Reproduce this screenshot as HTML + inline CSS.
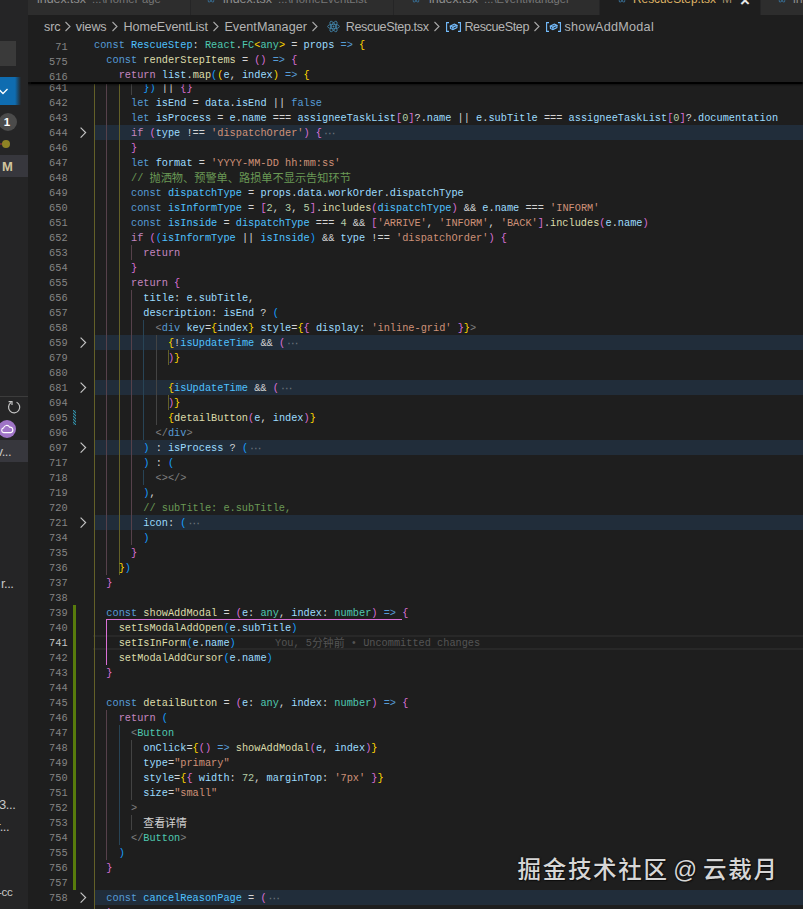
<!DOCTYPE html>
<html lang="zh-CN">
<head>
<meta charset="utf-8">
<title>RescueStep.tsx</title>
<style>
html,body{margin:0;padding:0;background:#1e1e1e;}
body{width:803px;height:909px;overflow:hidden;position:relative;font-family:"Liberation Sans","Noto Sans CJK SC",sans-serif;}
#app{position:absolute;left:0;top:0;width:803px;height:909px;overflow:hidden;background:#1e1e1e;}
.abs{position:absolute;}
/* side bar */
#side{position:absolute;left:0;top:0;width:28px;height:909px;background:#252526;overflow:hidden;}
#side .t{position:absolute;color:#c8c8c8;font-size:13px;line-height:16px;white-space:pre;}
/* tabs */
#tabs{position:absolute;left:28px;top:0;width:775px;height:15px;background:#252526;overflow:hidden;}
.tab{position:absolute;top:0;height:14.5px;background:#2d2d2d;overflow:hidden;}
.tab span{position:absolute;top:-8px;font-size:12.4px;line-height:15px;white-space:pre;color:#8f8f8f;}
.tab span.d{font-size:11.25px;color:#777;}
/* breadcrumb */
#crumbs{position:absolute;left:28px;top:15px;width:775px;height:22px;background:#1e1e1e;}
#crumbs span{position:absolute;top:1px;height:22px;line-height:22px;font-size:12.6px;color:#b4b4b4;white-space:pre;}
#crumbs svg{position:absolute;}
/* code */
.ln,.cl{font-family:"Liberation Mono","Noto Sans CJK SC",monospace;font-size:10.27px;line-height:15px;height:15px;white-space:pre;position:absolute;}
.ln{left:28px;width:39.6px;text-align:right;color:#858585;}
.ln.cur{color:#c6c6c6;}
.cl{left:94px;color:#d4d4d4;letter-spacing:0px;}
.k{color:#569cd6}.c{color:#c586c0}.v{color:#9cdcfe}.cv{color:#4fc1ff}.f{color:#dcdcaa}.t{color:#4ec9b0}
.s{color:#ce9178}.n{color:#b5cea8}.m{color:#6a9955}.g{color:#808080}
.b1{color:#ffd700}.b2{color:#da70d6}.b3{color:#179fff}
.mz,.z{font-size:11.2px;letter-spacing:0;position:relative;top:1px;}
.z{font-size:10.9px;top:0.5px;}
.mz{color:#6a9955}
.fd{color:#6b747c;display:inline-block;width:12px;margin-left:2px;font-family:"DejaVu Sans",sans-serif;font-size:11.5px;letter-spacing:0;text-align:center;line-height:15px;vertical-align:top;position:relative;top:0px;}
.fold{position:absolute;left:93.5px;width:709.5px;height:15px;background:#212d3a;}
.gd{position:absolute;width:1px;}
.g0{background:#434343}.g1{background:#636028}.g2{background:#56414b}.g3{background:#284456}
.blame{color:#545454;}
#sticky{position:absolute;left:28px;top:37px;width:775px;height:45px;background:#1e1e1e;box-shadow:0 1.5px 1px 0 #000,0 3px 2px 0 rgba(0,0,0,.45);}
#wm{position:absolute;left:517.5px;top:852px;font-size:23.5px;letter-spacing:1.7px;word-spacing:-3.8px;line-height:36px;color:#d6d6d6;font-weight:500;white-space:pre;text-shadow:0 0 2px rgba(0,0,0,.6),1px 1px 1px rgba(0,0,0,.5);}

</style>
</head>
<body>
<div id="app">
<div id="editor" class="abs" style="left:28px;top:37px;width:775px;height:872px;"></div>
<div class="fold" style="top:125px"></div>
<div class="fold" style="top:335px"></div>
<div class="fold" style="top:380px"></div>
<div class="fold" style="top:440px"></div>
<div class="fold" style="top:515px"></div>
<div class="fold" style="top:890px"></div>
<div class="abs" style="left:93px;top:635px;width:710px;height:11px;border-top:2px solid #282828;border-bottom:2px solid #282828;"></div>
<div class="gd g1" style="left:94.0px;top:80px;height:840px"></div>
<div class="gd g2" style="left:106.3px;top:80px;height:495px"></div>
<div class="gd g1" style="left:118.7px;top:80px;height:495px"></div>
<div class="gd g0" style="left:131.0px;top:80px;height:15px"></div>
<div class="gd g2" style="left:131.0px;top:245px;height:15px"></div>
<div class="gd g2" style="left:131.0px;top:290px;height:255px"></div>
<div class="gd g3" style="left:143.3px;top:320px;height:120px"></div>
<div class="gd g3" style="left:143.3px;top:470px;height:15px"></div>
<div class="gd g0" style="left:155.6px;top:335px;height:90px"></div>
<div class="gd g1" style="left:167.9px;top:350px;height:15px"></div>
<div class="gd g1" style="left:167.9px;top:395px;height:15px"></div>
<div class="gd g2" style="left:106.3px;top:710px;height:150px"></div>
<div class="gd g3" style="left:118.7px;top:725px;height:120px"></div>
<div class="gd g0" style="left:131.0px;top:740px;height:60px"></div>
<div class="gd g0" style="left:131.0px;top:815px;height:15px"></div>
<div class="abs" style="left:106.3px;top:619px;width:1px;height:46px;background:#da70d6"></div>
<div class="abs" style="left:106.3px;top:619px;width:295.8px;height:1px;background:#da70d6"></div>
<div class="abs" style="left:73px;top:605px;width:3px;height:285px;background:#587c0c"></div>
<svg class="abs" style="left:73px;top:410px" width="3" height="15" viewBox="0 0 3 15"><path d="M-1 -4L4 1M-1 -1L4 4M-1 2L4 7M-1 5L4 10M-1 8L4 13M-1 11L4 16M-1 14L4 19" stroke="#3497b2" stroke-width="1.05"/></svg>
<div class="ln" style="top:81px">641</div>
<div class="cl" style="top:81px">        <span class="b3">})</span> || <span class="b2">{}</span></div>
<div class="ln" style="top:96px">642</div>
<div class="cl" style="top:96px">      <span class="k">let</span> <span class="v">isEnd</span> = <span class="v">data</span>.<span class="v">isEnd</span> || <span class="k">false</span></div>
<div class="ln" style="top:111px">643</div>
<div class="cl" style="top:111px">      <span class="k">let</span> <span class="v">isProcess</span> = <span class="v">e</span>.<span class="v">name</span> === <span class="v">assigneeTaskList</span><span class="b2">[</span><span class="n">0</span><span class="b2">]</span>?.<span class="v">name</span> || <span class="v">e</span>.<span class="v">subTitle</span> === <span class="v">assigneeTaskList</span><span class="b2">[</span><span class="n">0</span><span class="b2">]</span>?.<span class="v">documentation</span></div>
<div class="ln" style="top:126px">644</div>
<div class="cl" style="top:126px">      <span class="c">if</span> <span class="b2">(</span><span class="v">type</span> !== <span class="s">'dispatchOrder'</span><span class="b2">)</span> <span class="b2">{</span><span class="fd">⋯</span></div>
<svg class="abs" style="left:78px;top:125px" width="10" height="15" viewBox="0 0 10 15"><path d="M2.6 2.6L7.6 7.6L2.6 12.6" fill="none" stroke="#c5c5c5" stroke-width="1.2"/></svg>
<div class="ln" style="top:141px">646</div>
<div class="cl" style="top:141px">      <span class="b2">}</span></div>
<div class="ln" style="top:156px">647</div>
<div class="cl" style="top:156px">      <span class="k">let</span> <span class="v">format</span> = <span class="s">'YYYY-MM-DD hh:mm:ss'</span></div>
<div class="ln" style="top:171px">648</div>
<div class="cl" style="top:171px">      <span class="m">// </span><span class="mz">抛洒物、预警单、路损单不显示告知环节</span></div>
<div class="ln" style="top:186px">649</div>
<div class="cl" style="top:186px">      <span class="k">const</span> <span class="cv">dispatchType</span> = <span class="v">props</span>.<span class="v">data</span>.<span class="v">workOrder</span>.<span class="v">dispatchType</span></div>
<div class="ln" style="top:201px">650</div>
<div class="cl" style="top:201px">      <span class="k">const</span> <span class="cv">isInformType</span> = <span class="b2">[</span><span class="n">2</span>, <span class="n">3</span>, <span class="n">5</span><span class="b2">]</span>.<span class="f">includes</span><span class="b2">(</span><span class="cv">dispatchType</span><span class="b2">)</span> &amp;&amp; <span class="v">e</span>.<span class="v">name</span> === <span class="s">'INFORM'</span></div>
<div class="ln" style="top:216px">651</div>
<div class="cl" style="top:216px">      <span class="k">const</span> <span class="cv">isInside</span> = <span class="cv">dispatchType</span> === <span class="n">4</span> &amp;&amp; <span class="b2">[</span><span class="s">'ARRIVE'</span>, <span class="s">'INFORM'</span>, <span class="s">'BACK'</span><span class="b2">]</span>.<span class="f">includes</span><span class="b2">(</span><span class="v">e</span>.<span class="v">name</span><span class="b2">)</span></div>
<div class="ln" style="top:231px">652</div>
<div class="cl" style="top:231px">      <span class="c">if</span> <span class="b2">(</span><span class="b3">(</span><span class="cv">isInformType</span> || <span class="cv">isInside</span><span class="b3">)</span> &amp;&amp; <span class="v">type</span> !== <span class="s">'dispatchOrder'</span><span class="b2">)</span> <span class="b2">{</span></div>
<div class="ln" style="top:246px">653</div>
<div class="cl" style="top:246px">        <span class="c">return</span></div>
<div class="ln" style="top:261px">654</div>
<div class="cl" style="top:261px">      <span class="b2">}</span></div>
<div class="ln" style="top:276px">655</div>
<div class="cl" style="top:276px">      <span class="c">return</span> <span class="b2">{</span></div>
<div class="ln" style="top:291px">656</div>
<div class="cl" style="top:291px">        <span class="v">title</span>: <span class="v">e</span>.<span class="v">subTitle</span>,</div>
<div class="ln" style="top:306px">657</div>
<div class="cl" style="top:306px">        <span class="v">description</span>: <span class="v">isEnd</span> ? <span class="b3">(</span></div>
<div class="ln" style="top:321px">658</div>
<div class="cl" style="top:321px">          <span class="g">&lt;</span><span class="k">div</span> <span class="v">key</span>=<span class="b1">{</span><span class="v">index</span><span class="b1">}</span> <span class="v">style</span>=<span class="b1">{</span><span class="b2">{</span> <span class="v">display</span>: <span class="s">'inline-grid'</span> <span class="b2">}</span><span class="b1">}</span><span class="g">&gt;</span></div>
<div class="ln" style="top:336px">659</div>
<div class="cl" style="top:336px">            <span class="b1">{</span>!<span class="cv">isUpdateTime</span> &amp;&amp; <span class="b2">(</span><span class="fd">⋯</span></div>
<svg class="abs" style="left:78px;top:335px" width="10" height="15" viewBox="0 0 10 15"><path d="M2.6 2.6L7.6 7.6L2.6 12.6" fill="none" stroke="#c5c5c5" stroke-width="1.2"/></svg>
<div class="ln" style="top:351px">679</div>
<div class="cl" style="top:351px">            <span class="b2">)</span><span class="b1">}</span></div>
<div class="ln" style="top:366px">680</div>
<div class="ln" style="top:381px">681</div>
<div class="cl" style="top:381px">            <span class="b1">{</span><span class="cv">isUpdateTime</span> &amp;&amp; <span class="b2">(</span><span class="fd">⋯</span></div>
<svg class="abs" style="left:78px;top:380px" width="10" height="15" viewBox="0 0 10 15"><path d="M2.6 2.6L7.6 7.6L2.6 12.6" fill="none" stroke="#c5c5c5" stroke-width="1.2"/></svg>
<div class="ln" style="top:396px">694</div>
<div class="cl" style="top:396px">            <span class="b2">)</span><span class="b1">}</span></div>
<div class="ln" style="top:411px">695</div>
<div class="cl" style="top:411px">            <span class="b1">{</span><span class="f">detailButton</span><span class="b2">(</span><span class="v">e</span>, <span class="v">index</span><span class="b2">)</span><span class="b1">}</span></div>
<div class="ln" style="top:426px">696</div>
<div class="cl" style="top:426px">          <span class="g">&lt;/</span><span class="k">div</span><span class="g">&gt;</span></div>
<div class="ln" style="top:441px">697</div>
<div class="cl" style="top:441px">        <span class="b3">)</span> : <span class="v">isProcess</span> ? <span class="b3">(</span><span class="fd">⋯</span></div>
<svg class="abs" style="left:78px;top:440px" width="10" height="15" viewBox="0 0 10 15"><path d="M2.6 2.6L7.6 7.6L2.6 12.6" fill="none" stroke="#c5c5c5" stroke-width="1.2"/></svg>
<div class="ln" style="top:456px">717</div>
<div class="cl" style="top:456px">        <span class="b3">)</span> : <span class="b3">(</span></div>
<div class="ln" style="top:471px">718</div>
<div class="cl" style="top:471px">          <span class="g">&lt;&gt;&lt;/&gt;</span></div>
<div class="ln" style="top:486px">719</div>
<div class="cl" style="top:486px">        <span class="b3">)</span>,</div>
<div class="ln" style="top:501px">720</div>
<div class="cl" style="top:501px">        <span class="m">// subTitle: e.subTitle,</span></div>
<div class="ln" style="top:516px">721</div>
<div class="cl" style="top:516px">        <span class="v">icon</span>: <span class="b3">(</span><span class="fd">⋯</span></div>
<svg class="abs" style="left:78px;top:515px" width="10" height="15" viewBox="0 0 10 15"><path d="M2.6 2.6L7.6 7.6L2.6 12.6" fill="none" stroke="#c5c5c5" stroke-width="1.2"/></svg>
<div class="ln" style="top:531px">734</div>
<div class="cl" style="top:531px">        <span class="b3">)</span></div>
<div class="ln" style="top:546px">735</div>
<div class="cl" style="top:546px">      <span class="b2">}</span></div>
<div class="ln" style="top:561px">736</div>
<div class="cl" style="top:561px">    <span class="b1">}</span><span class="b3">)</span></div>
<div class="ln" style="top:576px">737</div>
<div class="cl" style="top:576px">  <span class="b2">}</span></div>
<div class="ln" style="top:591px">738</div>
<div class="ln" style="top:606px">739</div>
<div class="cl" style="top:606px">  <span class="k">const</span> <span class="f">showAddModal</span> = <span class="b2">(</span><span class="v">e</span>: <span class="t">any</span>, <span class="v">index</span>: <span class="t">number</span><span class="b2">)</span> <span class="k">=&gt;</span> <span class="b2">{</span></div>
<div class="ln" style="top:621px">740</div>
<div class="cl" style="top:621px">    <span class="f">setIsModalAddOpen</span><span class="b3">(</span><span class="v">e</span>.<span class="v">subTitle</span><span class="b3">)</span></div>
<div class="ln cur" style="top:636px">741</div>
<div class="cl" style="top:636px">    <span class="f">setIsInForm</span><span class="b3">(</span><span class="v">e</span>.<span class="v">name</span><span class="b3">)</span><span class="blame abs" style="left:181px;top:0">You, 5<span class="z">分钟前</span> • Uncommitted changes</span></div>
<div class="ln" style="top:651px">742</div>
<div class="cl" style="top:651px">    <span class="f">setModalAddCursor</span><span class="b3">(</span><span class="v">e</span>.<span class="v">name</span><span class="b3">)</span></div>
<div class="ln" style="top:666px">743</div>
<div class="cl" style="top:666px">  <span class="b2">}</span></div>
<div class="ln" style="top:681px">744</div>
<div class="ln" style="top:696px">745</div>
<div class="cl" style="top:696px">  <span class="k">const</span> <span class="f">detailButton</span> = <span class="b2">(</span><span class="v">e</span>: <span class="t">any</span>, <span class="v">index</span>: <span class="t">number</span><span class="b2">)</span> <span class="k">=&gt;</span> <span class="b2">{</span></div>
<div class="ln" style="top:711px">746</div>
<div class="cl" style="top:711px">    <span class="c">return</span> <span class="b3">(</span></div>
<div class="ln" style="top:726px">747</div>
<div class="cl" style="top:726px">      <span class="g">&lt;</span><span class="t">Button</span></div>
<div class="ln" style="top:741px">748</div>
<div class="cl" style="top:741px">        <span class="v">onClick</span>=<span class="b1">{</span><span class="b2">()</span> <span class="k">=&gt;</span> <span class="f">showAddModal</span><span class="b2">(</span><span class="v">e</span>, <span class="v">index</span><span class="b2">)</span><span class="b1">}</span></div>
<div class="ln" style="top:756px">749</div>
<div class="cl" style="top:756px">        <span class="v">type</span>=<span class="s">"primary"</span></div>
<div class="ln" style="top:771px">750</div>
<div class="cl" style="top:771px">        <span class="v">style</span>=<span class="b1">{</span><span class="b2">{</span> <span class="v">width</span>: <span class="n">72</span>, <span class="v">marginTop</span>: <span class="s">'7px'</span> <span class="b2">}</span><span class="b1">}</span></div>
<div class="ln" style="top:786px">751</div>
<div class="cl" style="top:786px">        <span class="v">size</span>=<span class="s">"small"</span></div>
<div class="ln" style="top:801px">752</div>
<div class="cl" style="top:801px">      <span class="g">&gt;</span></div>
<div class="ln" style="top:816px">753</div>
<div class="cl" style="top:816px">        <span class="z">查看详情</span></div>
<div class="ln" style="top:831px">754</div>
<div class="cl" style="top:831px">      <span class="g">&lt;/</span><span class="t">Button</span><span class="g">&gt;</span></div>
<div class="ln" style="top:846px">755</div>
<div class="cl" style="top:846px">    <span class="b3">)</span></div>
<div class="ln" style="top:861px">756</div>
<div class="cl" style="top:861px">  <span class="b2">}</span></div>
<div class="ln" style="top:876px">757</div>
<div class="ln" style="top:891px">758</div>
<div class="cl" style="top:891px">  <span class="k">const</span> <span class="cv">cancelReasonPage</span> = <span class="b2">(</span><span class="fd">⋯</span></div>
<svg class="abs" style="left:78px;top:890px" width="10" height="15" viewBox="0 0 10 15"><path d="M2.6 2.6L7.6 7.6L2.6 12.6" fill="none" stroke="#c5c5c5" stroke-width="1.2"/></svg>
<div class="ln" style="top:906px">759</div>
<div class="cl" style="top:906px">  <span class="b2">)</span></div>
<div id="sticky"></div>
<div class="ln" style="top:40px">71</div>
<div class="cl" style="top:38px"><span class="k">const</span> <span class="cv">RescueStep</span>: <span class="t">React</span>.<span class="t">FC</span><span class="b1">&lt;</span><span class="t">any</span><span class="b1">&gt;</span> = <span class="v">props</span> <span class="k">=&gt;</span> <span class="b1">{</span></div>
<div class="ln" style="top:55px">575</div>
<div class="cl" style="top:53px">  <span class="k">const</span> <span class="f">renderStepItems</span> = <span class="b2">()</span> <span class="k">=&gt;</span> <span class="b2">{</span></div>
<div class="ln" style="top:70px">616</div>
<div class="cl" style="top:68px">    <span class="c">return</span> <span class="v">list</span>.<span class="f">map</span><span class="b3">(</span><span class="b1">(</span><span class="v">e</span>, <span class="v">index</span><span class="b1">)</span> <span class="k">=&gt;</span> <span class="b1">{</span></div>
<div id="crumbs">
<span style="left:16.0px;letter-spacing:-0.17px">src</span>
<svg style="left:36.2px;top:6px" width="8" height="11" viewBox="0 0 8 11"><path d="M1.5 1L6 5.5L1.5 10" fill="none" stroke="#a9a9a9" stroke-width="1.1"/></svg>
<span style="left:47.8px;letter-spacing:-0.16px">views</span>
<svg style="left:83.2px;top:6px" width="8" height="11" viewBox="0 0 8 11"><path d="M1.5 1L6 5.5L1.5 10" fill="none" stroke="#a9a9a9" stroke-width="1.1"/></svg>
<span style="left:95.6px;letter-spacing:-0.08px">HomeEventList</span>
<svg style="left:184.2px;top:6px" width="8" height="11" viewBox="0 0 8 11"><path d="M1.5 1L6 5.5L1.5 10" fill="none" stroke="#a9a9a9" stroke-width="1.1"/></svg>
<span style="left:196.4px;letter-spacing:0.06px">EventManager</span>
<svg style="left:283.2px;top:6px" width="8" height="11" viewBox="0 0 8 11"><path d="M1.5 1L6 5.5L1.5 10" fill="none" stroke="#a9a9a9" stroke-width="1.1"/></svg>
<svg style="left:299.0px;top:4.5px" width="13" height="13" viewBox="0 0 15 15"><g fill="none" stroke="#4388ae" stroke-width="1.0"><ellipse cx="7.5" cy="7.5" rx="6.8" ry="2.6"/><ellipse cx="7.5" cy="7.5" rx="6.8" ry="2.6" transform="rotate(60 7.5 7.5)"/><ellipse cx="7.5" cy="7.5" rx="6.8" ry="2.6" transform="rotate(120 7.5 7.5)"/></g><circle cx="7.5" cy="7.5" r="1.1" fill="#4388ae"/></svg>
<span style="left:317.8px;letter-spacing:-0.39px">RescueStep.tsx</span>
<svg style="left:405.2px;top:6px" width="8" height="11" viewBox="0 0 8 11"><path d="M1.5 1L6 5.5L1.5 10" fill="none" stroke="#a9a9a9" stroke-width="1.1"/></svg>
<svg style="left:417.5px;top:6.5px" width="15" height="10" viewBox="0 0 15 10"><g fill="none" stroke="#75beff" stroke-width="1.1"><path d="M3 0.6H0.6V9.4H3"/><path d="M12 0.6H14.4V9.4H12"/><path d="M4.4 4.1L8.4 2.1L10.9 3.2L6.9 5.3Z" fill="#75beff" fill-opacity="0.35"/><path d="M4.4 4.1V6.4L6.9 7.7L10.9 5.6V3.2M6.9 5.3V7.7"/></g></svg>
<span style="left:436.4px;letter-spacing:-0.40px">RescueStep</span>
<svg style="left:505.2px;top:6px" width="8" height="11" viewBox="0 0 8 11"><path d="M1.5 1L6 5.5L1.5 10" fill="none" stroke="#a9a9a9" stroke-width="1.1"/></svg>
<svg style="left:518.0px;top:6.5px" width="15" height="10" viewBox="0 0 15 10"><g fill="none" stroke="#75beff" stroke-width="1.1"><path d="M3 0.6H0.6V9.4H3"/><path d="M12 0.6H14.4V9.4H12"/><path d="M4.4 4.1L8.4 2.1L10.9 3.2L6.9 5.3Z" fill="#75beff" fill-opacity="0.35"/><path d="M4.4 4.1V6.4L6.9 7.7L10.9 5.6V3.2M6.9 5.3V7.7"/></g></svg>
<span style="left:536.5px;letter-spacing:0.28px">showAddModal</span>
</div>
<div id="tabs">
<div class="tab" style="left:0;width:162px"><span style="left:9px">index.tsx</span><span class="d" style="left:64px">...\HomePage</span></div>
<div class="tab" style="left:163px;width:202px"><svg class="abs" style="left:15px;top:-7px" width="10" height="10" viewBox="0 0 15 15"><g fill="none" stroke="#37698c" stroke-width="1.4"><ellipse cx="7.5" cy="7.5" rx="6.6" ry="2.6"/><ellipse cx="7.5" cy="7.5" rx="6.6" ry="2.6" transform="rotate(60 7.5 7.5)"/><ellipse cx="7.5" cy="7.5" rx="6.6" ry="2.6" transform="rotate(120 7.5 7.5)"/></g></svg><span style="left:32px">index.tsx</span><span class="d" style="left:87px">...\HomeEventList</span></div>
<div class="tab" style="left:366px;width:205px"><svg class="abs" style="left:17px;top:-7px" width="10" height="10" viewBox="0 0 15 15"><g fill="none" stroke="#37698c" stroke-width="1.4"><ellipse cx="7.5" cy="7.5" rx="6.6" ry="2.6"/><ellipse cx="7.5" cy="7.5" rx="6.6" ry="2.6" transform="rotate(60 7.5 7.5)"/><ellipse cx="7.5" cy="7.5" rx="6.6" ry="2.6" transform="rotate(120 7.5 7.5)"/></g></svg><span style="left:35px">index.tsx</span><span class="d" style="left:90px">...\EventManager</span></div>
<div class="tab" style="left:572px;width:160px;height:15px;background:#1e1e1e"><svg class="abs" style="left:17px;top:-7px" width="10" height="10" viewBox="0 0 15 15"><g fill="none" stroke="#37698c" stroke-width="1.4"><ellipse cx="7.5" cy="7.5" rx="6.6" ry="2.6"/><ellipse cx="7.5" cy="7.5" rx="6.6" ry="2.6" transform="rotate(60 7.5 7.5)"/><ellipse cx="7.5" cy="7.5" rx="6.6" ry="2.6" transform="rotate(120 7.5 7.5)"/></g></svg><span style="left:33px;color:#dfb365;font-size:11.85px">RescueStep.tsx</span><span style="left:122px;color:#a08f6c;font-size:12px">M</span><span style="left:140px;color:#e8e8e8;font-size:17px;font-weight:bold;top:-7.5px">×</span></div>
<div class="tab" style="left:733px;width:42px"><svg class="abs" style="left:16px;top:-7px" width="10" height="10" viewBox="0 0 15 15"><g fill="none" stroke="#37698c" stroke-width="1.4"><ellipse cx="7.5" cy="7.5" rx="6.6" ry="2.6"/><ellipse cx="7.5" cy="7.5" rx="6.6" ry="2.6" transform="rotate(60 7.5 7.5)"/><ellipse cx="7.5" cy="7.5" rx="6.6" ry="2.6" transform="rotate(120 7.5 7.5)"/></g></svg><span style="left:32px">index.tsx</span></div>
</div>
<div id="side">
<div class="abs" style="left:0;top:41px;width:16px;height:25px;background:#3a3a3a"></div>
<div class="abs" style="left:0;top:77px;width:21px;height:28px;background:linear-gradient(90deg,#0f6cb0 0,#0f6cb0 15px,#252526 21px)"></div>
<svg class="abs" style="left:-2px;top:87px" width="12" height="10" viewBox="0 0 12 10"><path d="M1 2.5L5 6.5L9.5 2" fill="none" stroke="#fff" stroke-width="1.3"/></svg>
<div class="abs" style="left:-1.5px;top:113px;width:18px;height:18px;border-radius:9px;background:#4b4b4b;color:#fff;font-size:11.5px;font-weight:bold;line-height:18px;text-align:center;text-indent:-1px">1</div>
<div class="abs" style="left:0;top:143px;width:4px;height:2px;background:#6b2f2f"></div>
<div class="abs" style="left:2px;top:140px;width:8px;height:8px;border-radius:4px;background:#8f8325"></div>
<div class="abs" style="left:0;top:155px;width:28px;height:22px;background:#37373d"></div>
<div class="t" style="left:2px;top:159px;color:#d2c59e;font-weight:bold;font-size:13px">M</div>
<div class="abs" style="left:0;top:396px;width:28px;height:1px;background:#3c3c3c"></div>
<svg class="abs" style="left:6px;top:399px" width="17" height="17" viewBox="0 0 17 17"><path d="M10.6 3.2A5.6 5.6 0 1 1 5 3.6" fill="none" stroke="#c5c5c5" stroke-width="1.2"/><path d="M2.6 2.6H6V6" fill="none" stroke="#c5c5c5" stroke-width="1.2"/></svg>
<div class="abs" style="left:-2px;top:420px;width:18px;height:18px;border-radius:9px;background:#9f74c6"></div>
<svg class="abs" style="left:0;top:424px" width="14" height="10" viewBox="0 0 14 10"><path d="M3.6 8.6A2.4 2.4 0 0 1 3.6 3.9A3.2 3.2 0 0 1 9.6 3.2A2.7 2.7 0 0 1 10.6 8.6Z" fill="none" stroke="#fff" stroke-width="1.1"/></svg>
<div class="abs" style="left:0;top:440px;width:28px;height:22px;background:#37373d"></div>
<div class="t" style="left:-3.5px;top:444px;letter-spacing:-0.4px">v...</div>
<div class="t" style="left:1px;top:576px;letter-spacing:-0.5px">r...</div>
<div class="t" style="left:-1px;top:797px;letter-spacing:-0.4px">3...</div>
<div class="t" style="left:-3.4px;top:819px;letter-spacing:-0.5px">r...</div>
<div class="t" style="left:-2px;top:884px;font-size:11.5px;letter-spacing:-0.3px">-cc</div>
</div>
<div id="wm">掘金技术社区 @ 云裁月</div>
</div>
</body>
</html>
